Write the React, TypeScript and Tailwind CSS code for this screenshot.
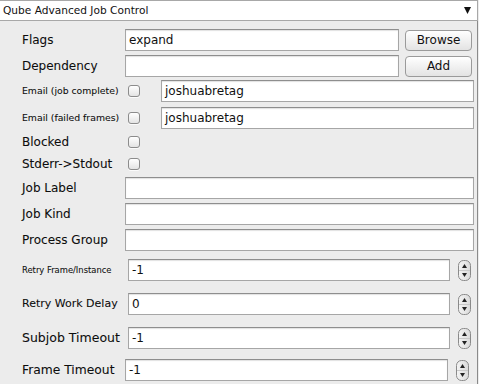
import React from "react";

const font = { fontFamily: '"DejaVu Sans", Verdana, sans-serif' };

function Field({ value, className = "" }: { value?: string; className?: string }) {
  return (
    <div
      className={
        "h-[22px] flex items-center bg-white border border-[#a6a6a6] border-t-[#8e8e8e] shadow-[inset_0_1px_1px_rgba(0,0,0,0.12)] pl-[3px] text-[12px] text-[#111] " +
        className
      }
    >
      {value}
    </div>
  );
}

function Check() {
  return (
    <div className="w-[12px] h-[12px] rounded-[3px] border border-[#8c8c8c] bg-linear-to-b from-white to-[#e4e4e4] shadow-[0_1px_0_rgba(255,255,255,0.8)]" />
  );
}

function Btn({ label }: { label: string }) {
  return (
    <div className="w-[67px] h-[21px] mr-[2px] rounded-[4px] border border-[#9a9a9a] bg-linear-to-b from-white to-[#e3e3e3] flex items-center justify-center text-[12px] text-[#111]">
      {label}
    </div>
  );
}

function Stepper() {
  return (
    <svg width="13" height="21" viewBox="0 0 13 21" className="shrink-0">
      <defs>
        <linearGradient id="stepGrad" x1="0" y1="0" x2="1" y2="0">
          <stop offset="0" stopColor="#f4f4f4" />
          <stop offset="1" stopColor="#dadada" />
        </linearGradient>
      </defs>
      <rect x="0.5" y="0.5" width="12" height="20" rx="5" fill="url(#stepGrad)" stroke="#8a8a8a" />
      <line x1="1" y1="10.5" x2="12" y2="10.5" stroke="#c8c8c8" />
      <polygon points="6.5,4 9,8 4,8" fill="#222" />
      <polygon points="4,13 9,13 6.5,17" fill="#222" />
    </svg>
  );
}

function Label({ text, w = "w-[103px]", size = "text-[12px]" }: { text: string; w?: string; size?: string }) {
  return (
    <div className={"shrink-0 text-[#0d0d0d] [-webkit-text-stroke:0.08px_#111] " + w + " " + size}>{text}</div>
  );
}

export default function App() {
  return (
    <div style={font} className="w-[479px] h-[384px] bg-[#ececec] overflow-hidden">
      <div className="w-[478px] h-[21px] bg-white border-y border-r border-[#a8a8a8] flex items-center justify-between pl-[3px] pr-[6px]">
        <span className="text-[10.6px] text-[#111]">Qube Advanced Job Control</span>
        <svg width="7" height="7" viewBox="0 0 7 7">
          <polygon points="0,0 7,0 3.5,7" fill="#111" />
        </svg>
      </div>

      <div className="w-[478px] h-[363px] border-r border-[#8a8a8a] pl-[22px] pr-[3px] flex flex-col">
        <div className="flex items-center mt-[8px]">
          <Label text="Flags" />
          <Field value="expand" className="flex-1" />
          <div className="ml-[6px]"><Btn label="Browse" /></div>
        </div>
        <div className="flex items-center mt-[4px]">
          <Label text="Dependency" />
          <Field className="flex-1" />
          <div className="ml-[6px]"><Btn label="Add" /></div>
        </div>
        <div className="flex items-center mt-[3px]">
          <Label text="Email (job complete)" w="w-[106px]" size="text-[9.3px]" />
          <Check />
          <Field value="joshuabretag" className="flex-1 ml-[21px]" />
        </div>
        <div className="flex items-center mt-[5px]">
          <Label text="Email (failed frames)" w="w-[106px]" size="text-[9.3px]" />
          <Check />
          <Field value="joshuabretag" className="flex-1 ml-[21px]" />
        </div>
        <div className="flex items-center h-[12px] mt-[7px]">
          <Label text="Blocked" w="w-[106px]" />
          <Check />
        </div>
        <div className="flex items-center h-[12px] mt-[10px]">
          <Label text="Stderr->Stdout" w="w-[106px]" />
          <Check />
        </div>
        <div className="flex items-center mt-[7px]">
          <Label text="Job Label" />
          <Field className="flex-1" />
        </div>
        <div className="flex items-center mt-[4px]">
          <Label text="Job Kind" />
          <Field className="flex-1" />
        </div>
        <div className="flex items-center mt-[4px]">
          <Label text="Process Group" />
          <Field className="flex-1" />
        </div>
        <div className="flex items-center mt-[8px]">
          <Label text="Retry Frame/Instance" w="w-[106px]" size="text-[8.4px]" />
          <Field value="-1" className="flex-1" />
          <div className="ml-[8px] mr-[3px] flex"><Stepper /></div>
        </div>
        <div className="flex items-center mt-[12px]">
          <Label text="Retry Work Delay" w="w-[106px]" size="text-[11px]" />
          <Field value="0" className="flex-1" />
          <div className="ml-[8px] mr-[3px] flex"><Stepper /></div>
        </div>
        <div className="flex items-center mt-[12px]">
          <Label text="Subjob Timeout" w="w-[106px]" size="text-[12.5px]" />
          <Field value="-1" className="flex-1" />
          <div className="ml-[8px] mr-[3px] flex"><Stepper /></div>
        </div>
        <div className="flex items-center mt-[10px]">
          <Label text="Frame Timeout" w="w-[103px]" size="text-[12.3px]" />
          <Field value="-1" className="flex-1" />
          <div className="ml-[8px] mr-[5px] flex"><Stepper /></div>
        </div>
      </div>
    </div>
  );
}
